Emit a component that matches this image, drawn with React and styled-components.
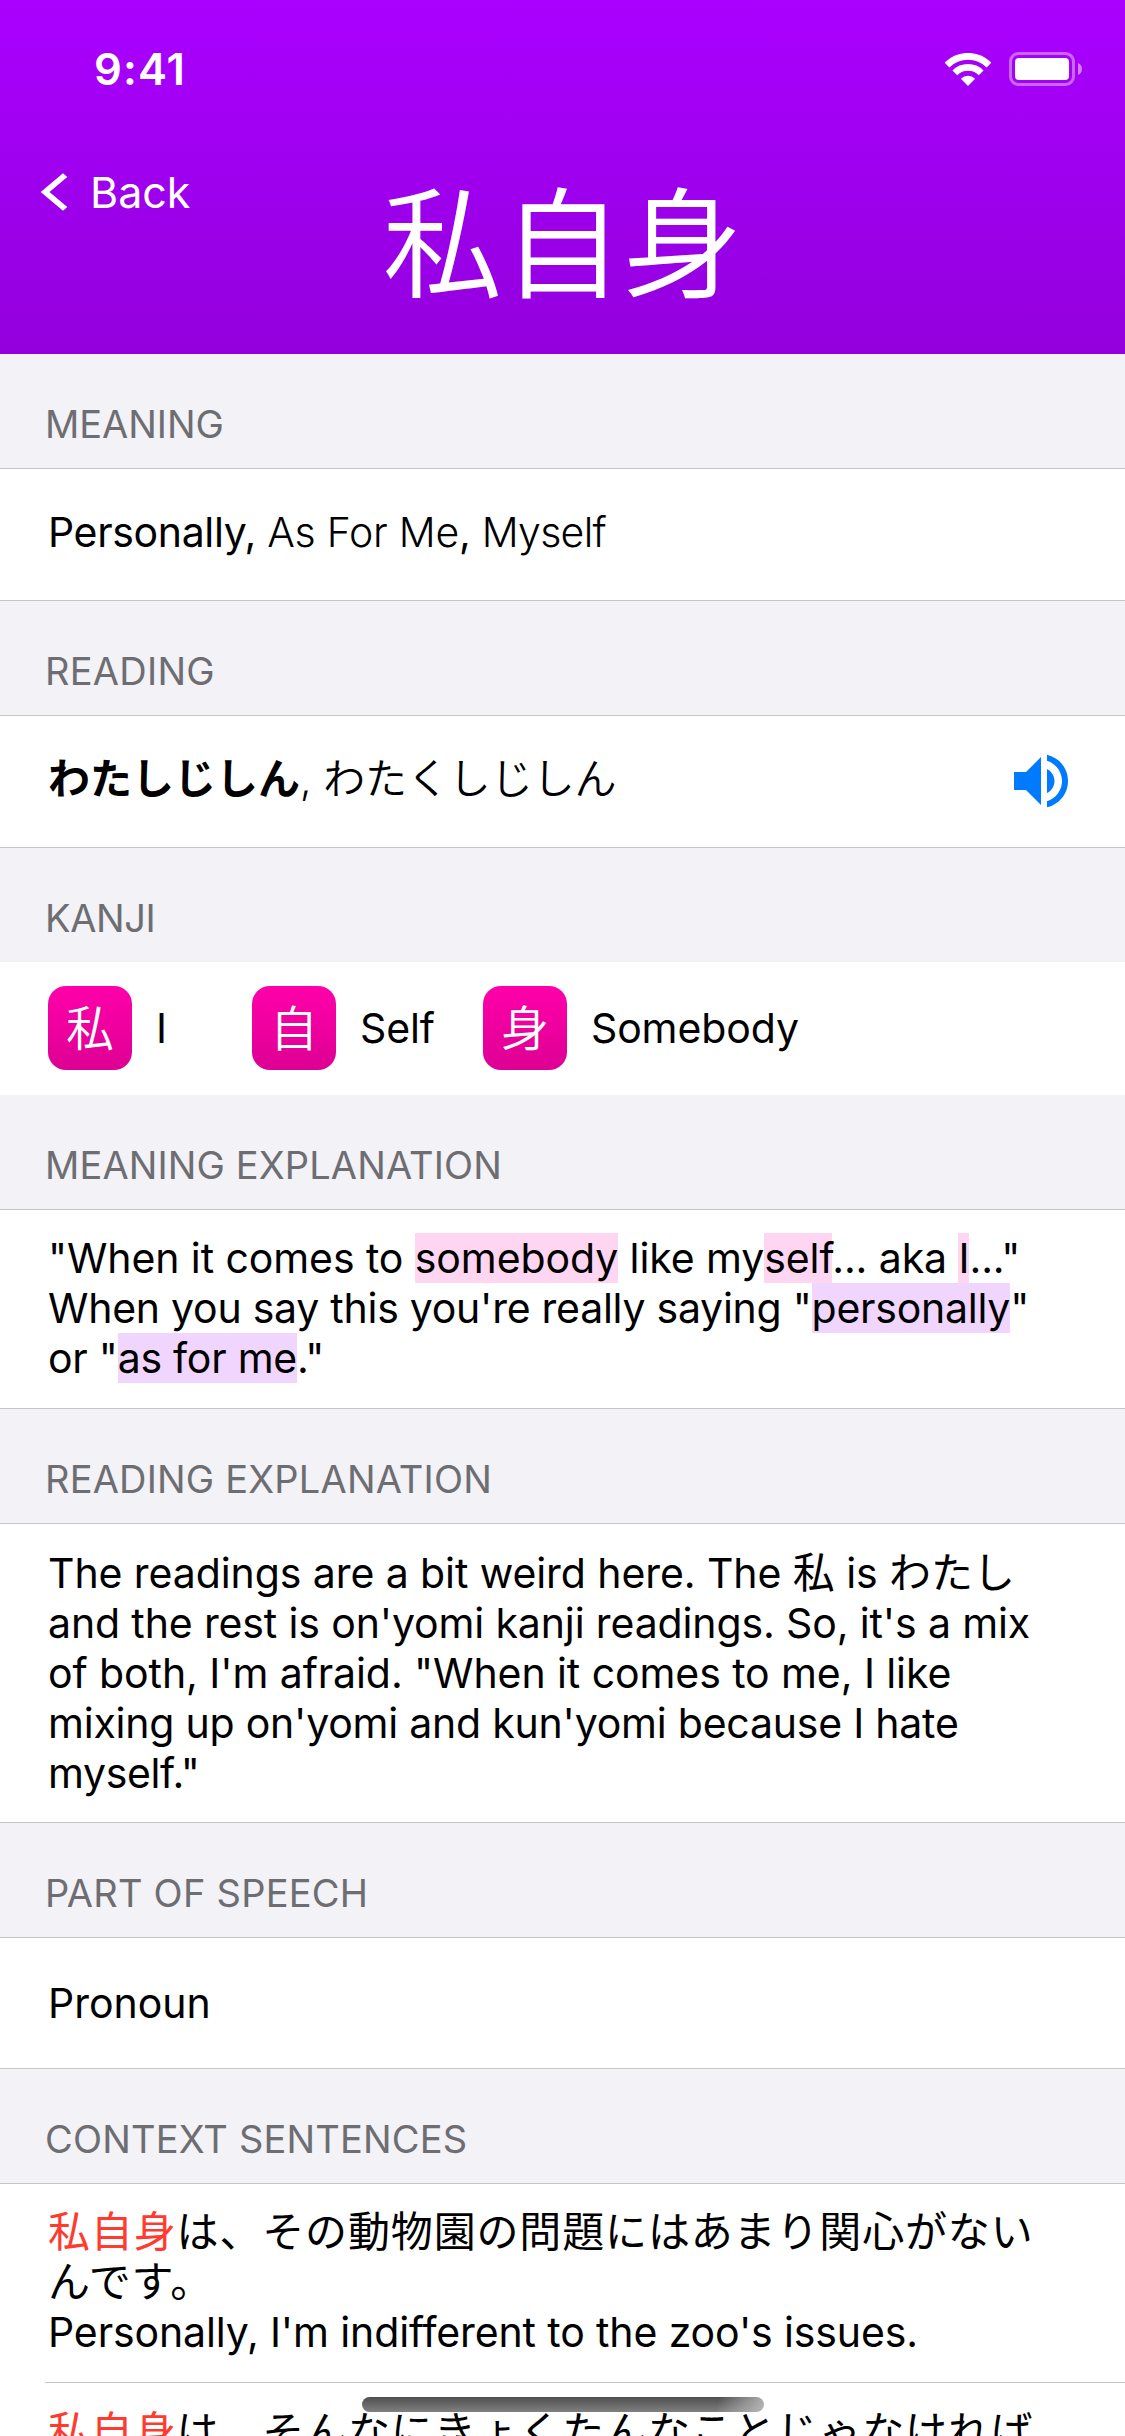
import React from "react";
import styled, { createGlobalStyle } from "styled-components";

const latin = `Inter, "Noto Sans CJK JP", sans-serif`;
const japanese = `"Noto Sans CJK JP", sans-serif`;

const GlobalStyle = createGlobalStyle`
  * { box-sizing: border-box; }
  body { margin: 0; background: #fff; }
`;

const Screen = styled.main`
  width: 1125px;
  height: 2436px;
  position: relative;
  overflow: hidden;
  background: #f2f2f7;
  font-family: ${latin};
  color: #000;
`;

const Header = styled.header`
  height: 354px;
  color: #fff;
  background: linear-gradient(#aa00ff, #9300dd);
`;

const StatusBar = styled.div`
  height: 138px;
  padding: 0 43px 0 94px;
  display: flex;
  align-items: center;
  justify-content: space-between;
`;

const Clock = styled.time`
  font-size: 43.5px;
  font-weight: 600;
  letter-spacing: 1.1px;
`;

const StatusIcons = styled.div`
  display: flex;
  align-items: center;
  gap: 18px;
  svg { display: block; }
`;

const NavBar = styled.nav`
  display: grid;
  grid-template-columns: 1fr auto 1fr;
  align-items: start;
`;

const BackButton = styled.a`
  margin: 28px 0 0 40px;
  display: flex;
  align-items: center;
  gap: 22px;
  font-size: 43px;
  line-height: 52px;
`;

const Title = styled.h1`
  margin: 24px 0 0;
  font-family: ${japanese};
  font-size: 120px;
  font-weight: 350;
  line-height: 150px;
`;

const SectionTitle = styled.h2`
  margin: 0;
  height: 114px;
  padding: 0 45px 21px;
  display: flex;
  align-items: flex-end;
  color: #6d6d72;
  font-size: 38px;
  font-weight: 400;
  line-height: 46px;
  letter-spacing: ${(p) => p.$track}px;
`;

const Card = styled.div`
  height: ${(p) => p.$height}px;
  padding: ${(p) => p.$top ?? 23}px 48px 0;
  background: #fff;
  border: solid #c6c6c8;
  border-width: 1px 0;
`;

const ReadingCard = styled(Card)`
  display: flex;
  align-items: flex-start;
  justify-content: space-between;
`;

const KanjiCard = styled.div`
  height: 133px;
  padding: 24px 48px 0;
  display: flex;
  gap: 48px;
  background: #fff;
`;

const SentenceList = styled.div`
  background: #fff;
  border-top: 1px solid #c6c6c8;
`;

const Sentence = styled.div`
  height: 198px;
  padding: 23px 48px 0;
`;

const Divider = styled.hr`
  margin: 0 0 1px 45px;
  height: 1px;
  border: 0;
  background: #c6c6c8;
`;

const Line = styled.div`
  height: 50px;
  font-size: 41px;
  line-height: 50px;
  white-space: nowrap;
  letter-spacing: ${(p) => p.$track ?? 0}px;
`;

const Light = styled.span`
  font-weight: 300;
  letter-spacing: ${(p) => p.$track ?? -0.25}px;
`;

const Ja = styled.span`
  font-family: ${japanese};
  font-size: 42px;
  line-height: 0;
  font-weight: ${(p) => p.$weight ?? 400};
  letter-spacing: ${(p) => p.$track ?? 0}px;
  color: ${(p) => (p.$accent ? "#ff3b30" : "inherit")};
`;

const Mark = styled.mark`
  color: inherit;
  background: ${(p) => (p.$kind === "vocabulary" ? "#f0d6ff" : "#ffd6f1")};
`;

const KanjiItem = styled.div`
  height: 84px;
  display: flex;
  align-items: center;
  gap: 24px;
`;

const KanjiTile = styled.span`
  width: 84px;
  height: 84px;
  padding-bottom: 6px;
  display: grid;
  place-items: center;
  border-radius: 18px;
  background: linear-gradient(#ff00aa, #dd0093);
  color: #fff;
  font-family: ${japanese};
  font-size: 48px;
  font-weight: 350;
  line-height: 78px;
`;

const KanjiLabel = styled.span`
  min-width: 48px;
  font-size: 41px;
  line-height: 50px;
  letter-spacing: -0.1px;
`;

const SpeakerIcon = styled.svg`
  margin-top: -9px;
  width: 72px;
  height: 72px;
  fill: #007aff;
`;

const HomeIndicator = styled.div`
  position: absolute;
  left: 362px;
  top: 2397px;
  width: 402px;
  height: 15px;
  border-radius: 8px;
  background:
    linear-gradient(105deg, rgba(190, 190, 190, 0) 88%, rgba(190, 190, 190, 0.9) 100%),
    linear-gradient(#4f4f4f, #808080);
`;

const Wifi = () => (
  <svg width="46" height="33" viewBox="0 0 46 33" fill="none" stroke="#fff" strokeWidth="6.8">
    <path d="M2 12A29.7 29.7 0 0 1 44 12" />
    <path d="M9.85 19.85A18.6 18.6 0 0 1 36.15 19.85" />
    <path d="M23 33L15.9 25.7A10.2 10.2 0 0 1 30.1 25.7Z" fill="#fff" stroke="none" />
  </svg>
);

const Battery = () => (
  <svg width="73" height="34" viewBox="0 0 73 34" fill="#fff">
    <rect x="1.5" y="1.5" width="63" height="31" rx="8" fill="none" stroke="#fff" strokeOpacity="0.4" strokeWidth="3" />
    <rect x="6" y="6" width="54" height="22" rx="4" />
    <path d="M69 11C71.5 12 73 14.3 73 17S71.5 22 69 23Z" opacity="0.5" />
  </svg>
);

const Chevron = () => (
  <svg width="28" height="40" viewBox="0 0 28 40" fill="#fff">
    <path d="M0.7 20L23 1.3L27.3 5L9.5 20L27.3 35L23 38.8Z" />
  </svg>
);

const kanji = [
  ["私", "I"],
  ["自", "Self"],
  ["身", "Somebody"],
];

export default function App() {
  return (
    <Screen>
      <GlobalStyle />
      <Header>
        <StatusBar>
          <Clock>9:41</Clock>
          <StatusIcons>
            <Wifi />
            <Battery />
          </StatusIcons>
        </StatusBar>
        <NavBar>
          <BackButton>
            <Chevron />
            Back
          </BackButton>
          <Title lang="ja">私自身</Title>
        </NavBar>
      </Header>

      <SectionTitle $track={-0.05}>MEANING</SectionTitle>
      <Card $height={133} $top={38}>
        <Line $track={-0.35}>
          Personally, <Light>As For Me</Light>, <Light $track={-0.7}>Myself</Light>
        </Line>
      </Card>

      <SectionTitle $track={0.25}>READING</SectionTitle>
      <ReadingCard $height={133} $top={38}>
        <Line>
          <Ja lang="ja" $weight={700}>わたしじしん</Ja>
          <Light $track={0}>, </Light>
          <Ja lang="ja" $weight={350} $track={-0.1}>わたくしじしん</Ja>
        </Line>
        <SpeakerIcon viewBox="0 0 24 24">
          <path d="M3 9v6h4l5 5V4L7 9H3zm13.5 3c0-1.77-1.02-3.29-2.5-4.03v8.05c1.48-.73 2.5-2.25 2.5-4.02zM14 3.23v2.06c2.89.86 5 3.54 5 6.71s-2.11 5.85-5 6.71v2.06c4.01-.91 7-4.49 7-8.77s-2.99-7.86-7-8.77z" />
        </SpeakerIcon>
      </ReadingCard>

      <SectionTitle $track={-0.4}>KANJI</SectionTitle>
      <KanjiCard>
        {kanji.map(([character, name]) => (
          <KanjiItem key={character}>
            <KanjiTile lang="ja">{character}</KanjiTile>
            <KanjiLabel>{name}</KanjiLabel>
          </KanjiItem>
        ))}
      </KanjiCard>

      <SectionTitle $track={0.12}>MEANING EXPLANATION</SectionTitle>
      <Card $height={200}>
        <Line $track={-0.09}>
          "When it comes to <Mark>somebody</Mark> like my<Mark>self</Mark>... aka <Mark>I</Mark>..."
        </Line>
        <Line $track={-0.25}>
          When you say this you're really saying "<Mark $kind="vocabulary">personally</Mark>"
        </Line>
        <Line $track={-0.25}>
          or "<Mark $kind="vocabulary">as for me</Mark>."
        </Line>
      </Card>

      <SectionTitle $track={0.18}>READING EXPLANATION</SectionTitle>
      <Card $height={300} $top={24}>
        <Line $track={-0.08}>
          The readings are a bit weird here. The <Ja lang="ja">私</Ja> is <Ja lang="ja">わたし</Ja>
        </Line>
        <Line $track={-0.13}>and the rest is on'yomi kanji readings. So, it's a mix</Line>
        <Line $track={-0.08}>of both, I'm afraid. "When it comes to me, I like</Line>
        <Line $track={-0.22}>mixing up on'yomi and kun'yomi because I hate</Line>
        <Line $track={-0.35}>myself."</Line>
      </Card>

      <SectionTitle $track={0.25}>PART OF SPEECH</SectionTitle>
      <Card $height={132} $top={40}>
        <Line>Pronoun</Line>
      </Card>

      <SectionTitle $track={0.18}>CONTEXT SENTENCES</SectionTitle>
      <SentenceList>
        <Sentence>
          <Line>
            <Ja lang="ja" $track={0.85} $accent>私自身</Ja>
            <Ja lang="ja" $track={0.85}>は、その動物園の問題にはあまり関心がない</Ja>
          </Line>
          <Line>
            <Ja lang="ja" $track={0.85}>んです。</Ja>
          </Line>
          <Line $track={-0.12}>Personally, I'm indifferent to the zoo's issues.</Line>
        </Sentence>
        <Divider />
        <Sentence>
          <Line>
            <Ja lang="ja" $track={0.85} $accent>私自身</Ja>
            <Ja lang="ja" $track={0.85}>は、そんなにきょくたんなことじゃなければ</Ja>
          </Line>
        </Sentence>
      </SentenceList>
      <HomeIndicator />
    </Screen>
  );
}
